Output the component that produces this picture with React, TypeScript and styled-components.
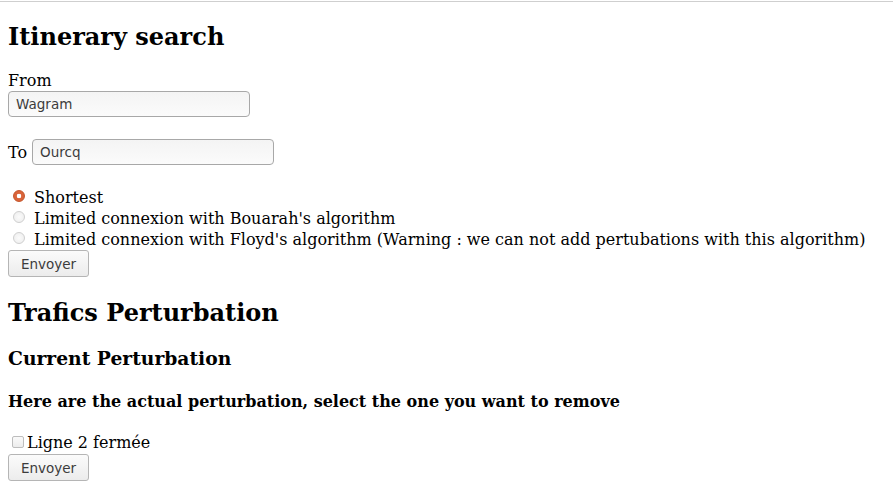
import React from "react";
import styled, { createGlobalStyle } from "styled-components";

const GlobalStyle = createGlobalStyle`
  html, body { margin: 0; padding: 0; background: #ffffff; }
  body {
    font-family: "DejaVu Serif", "Liberation Serif", serif;
    font-size: 16px;
    color: #000;
  }
`;

const TopRule = styled.div`
  margin-top: 1px;
  height: 1px;
  background: #cfcfcf;
`;

const Page = styled.main`
  padding: 0 8px;
`;

const Title = styled.h1<{ $top: number }>`
  margin: ${(p) => p.$top}px 0 0;
  font-size: 24px;
  line-height: 28px;
  font-weight: bold;
`;

const Subtitle = styled.h3`
  margin: 20px 0 0;
  font-size: 18.72px;
  line-height: 22px;
  font-weight: bold;
`;

const Note = styled.h4`
  margin: 23px 0 0;
  font-size: 16px;
  line-height: 19px;
  font-weight: bold;
`;

const Label = styled.label`
  display: block;
  margin-top: 20px;
  line-height: 19px;
`;

const TextInput = styled.input<{ $top?: number }>`
  display: block;
  box-sizing: border-box;
  margin: ${(p) => p.$top ?? 0}px 0 0;
  width: 242px;
  height: 26px;
  padding: 0 7px;
  border: 1px solid #a8a8a8;
  border-radius: 4px;
  background: linear-gradient(#f4f4f4, #fbfbfb);
  font-family: "DejaVu Sans", "Open Sans", sans-serif;
  font-size: 13.5px;
  color: #3c3c3c;
  outline: none;
`;

const ToRow = styled.div`
  display: flex;
  align-items: center;
  gap: 5px;
  margin-top: 22px;
  line-height: 19px;
`;

const RadioGroup = styled.div`
  margin-top: 22px;
`;

const OptionRow = styled.label`
  display: flex;
  align-items: center;
  height: 21px;
  line-height: 21px;
  white-space: nowrap;
`;

const Radio = styled.input.attrs({ type: "radio" })`
  appearance: none;
  box-sizing: border-box;
  margin: -3px 9px 0 5px;
  width: 12px;
  height: 12px;
  border-radius: 50%;
  border: 1px solid #cfcfcf;
  background: radial-gradient(circle, #fbfbfb 0, #ececec 100%);
  flex: none;
  &:checked {
    border: 1px solid #c4552a;
    background: radial-gradient(circle, #ffffff 0 2px, #d9643a 2.6px);
  }
`;

const Checkbox = styled.input.attrs({ type: "checkbox" })`
  appearance: none;
  box-sizing: border-box;
  margin: -2px 3px 0 4px;
  width: 12px;
  height: 12px;
  border-radius: 2px;
  border: 1px solid #bdbdbd;
  background: linear-gradient(#fafafa, #ececec);
  flex: none;
`;

const CheckRow = styled.label`
  display: flex;
  align-items: center;
  margin-top: 22px;
  height: 19px;
  line-height: 19px;
`;

const Button = styled.button<{ $top: number }>`
  display: block;
  box-sizing: border-box;
  margin: ${(p) => p.$top}px 0 0;
  width: 81px;
  height: 27px;
  padding: 0;
  border: 1px solid #b5b5b5;
  border-radius: 3px;
  background: linear-gradient(#fbfbfb, #ececec);
  font-family: "DejaVu Sans", "Open Sans", sans-serif;
  font-size: 13.5px;
  color: #3c3c3c;
`;

const options = [
  "Shortest",
  "Limited connexion with Bouarah's algorithm",
  "Limited connexion with Floyd's algorithm (Warning : we can not add pertubations with this algorithm)",
];

export default function App() {
  return (
    <>
      <GlobalStyle />
      <TopRule />
      <Page>
        <Title $top={21}>Itinerary search</Title>
        <Label htmlFor="from">From</Label>
        <TextInput id="from" $top={1} defaultValue="Wagram" />
        <ToRow>
          <span>To</span>
          <TextInput defaultValue="Ourcq" />
        </ToRow>
        <RadioGroup>
          {options.map((o, i) => (
            <OptionRow key={o}>
              <Radio name="algo" defaultChecked={i === 0} />
              {o}
            </OptionRow>
          ))}
        </RadioGroup>
        <Button $top={0}>Envoyer</Button>
        <Title $top={22}>Trafics Perturbation</Title>
        <Subtitle>Current Perturbation</Subtitle>
        <Note>Here are the actual perturbation, select the one you want to remove</Note>
        <CheckRow>
          <Checkbox />
          Ligne 2 fermée
        </CheckRow>
        <Button $top={2}>Envoyer</Button>
      </Page>
    </>
  );
}
